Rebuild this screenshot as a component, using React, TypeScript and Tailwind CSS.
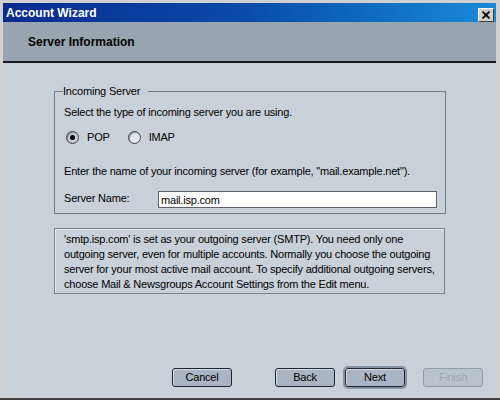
const Button = ({
  label,
  isDefault,
  disabled,
  className,
}: {
  label: string;
  isDefault?: boolean;
  disabled?: boolean;
  className?: string;
}) => (
  <div
    className={[
      "w-[60px] h-[19px] rounded-[3px] border flex items-center justify-center leading-none",
      disabled
        ? "border-[#8f9caa] bg-[#b9c3ce] text-[#9aa6b3]"
        : "border-[#1d2630] bg-[#a9b5c3] text-black shadow-[inset_1px_1px_0_#d5dde6]",
      isDefault ? "outline-2 outline-[#8593a3]" : "",
      className ?? "",
    ].join(" ")}
  >
    {label}
  </div>
);

const Radio = ({ checked, label }: { checked?: boolean; label: string }) => (
  <div className="flex items-center">
    <span
      className={
        "w-[13px] h-[13px] rounded-full border border-[#3d444c] flex items-center justify-center shadow-[inset_1px_1px_0_#8a939c] " +
        (checked ? "bg-[#c4ccd5]" : "bg-[#e2e8ee]")
      }
    >
      {checked && <span className="w-[5px] h-[5px] rounded-full bg-black" />}
    </span>
    <span className="ml-[8px]">{label}</span>
  </div>
);

export default function App() {
  return (
    <div className="w-[500px] h-[400px] bg-[#d0d0d0] flex flex-col pt-[3px] pl-[3px] pr-[4px] pb-[2px] border-b-2 border-[#404040] font-['Liberation_Sans',Arial,sans-serif] text-[11px] leading-[14px] tracking-[-0.2px] text-black">
      {/* title bar */}
      <div className="h-[19px] flex items-center justify-between pl-[3px] pr-[2px] bg-linear-to-r from-[#0a2a8e] via-[#0b4caa] to-[#1a8ad8]">
        <span className="text-white font-bold text-[12px] tracking-normal">Account Wizard</span>
        <span className="w-[16px] h-[14px] mt-[4px] bg-[#d4d0c8] border border-t-white border-l-white border-r-[#404040] border-b-[#404040] flex items-center justify-center">
          <svg width="10" height="8" viewBox="0 0 10 8">
            <path d="M1.5 0.5L8.5 7.5M8.5 0.5L1.5 7.5" stroke="black" strokeWidth="1.8" />
          </svg>
        </span>
      </div>

      {/* header */}
      <div className="h-[41px] bg-[#98a4b0] border-b-2 border-[#161a1e] flex items-center pl-[25px]">
        <span className="font-bold text-[12px] tracking-normal">Server Information</span>
      </div>

      {/* body */}
      <div className="flex-1 bg-[#c8d0d9] flex flex-col pl-[51px] pr-[50px] pt-[21px]">
        <fieldset className="border border-[#747c86] pl-[9px] pr-[8px] pt-[7px] pb-[5px]">
          <legend className="-ml-[1px] pr-[8px]">Incoming Server</legend>
          <div>Select the type of incoming server you are using.</div>
          <div className="flex items-center gap-[18px] mt-[11px] pl-[2px]">
            <Radio checked label="POP" />
            <Radio label="IMAP" />
          </div>
          <div className="mt-[20px]">
            Enter the name of your incoming server (for example, "mail.example.net").
          </div>
          <div className="flex items-center mt-[13px]">
            <span className="w-[94px] -mt-[3px]">Server Name:</span>
            <div className="flex-1 h-[17px] bg-white border border-[#5b616a] flex items-center pl-[2px]">
              mail.isp.com
            </div>
          </div>
        </fieldset>

        <div className="mt-[14px] mr-[1px] border border-[#7a828c] shadow-[inset_1px_1px_0_#e6ebf0] pl-[9px] pt-[3px] pb-[1px] leading-[15px]">
          <div>'smtp.isp.com' is set as your outgoing server (SMTP). You need only one</div>
          <div>outgoing server, even for multiple accounts. Normally you choose the outgoing</div>
          <div>server for your most active mail account. To specify additional outgoing servers,</div>
          <div>choose Mail &amp; Newsgroups Account Settings from the Edit menu.</div>
        </div>

        <div className="mt-auto mb-[9px] flex items-center justify-end pr-[13px] -mr-[50px]">
          <Button label="Cancel" />
          <Button label="Back" className="ml-[43px]" />
          <Button label="Next" isDefault className="ml-[10px]" />
          <Button label="Finish" disabled className="ml-[18px]" />
        </div>
      </div>
    </div>
  );
}
